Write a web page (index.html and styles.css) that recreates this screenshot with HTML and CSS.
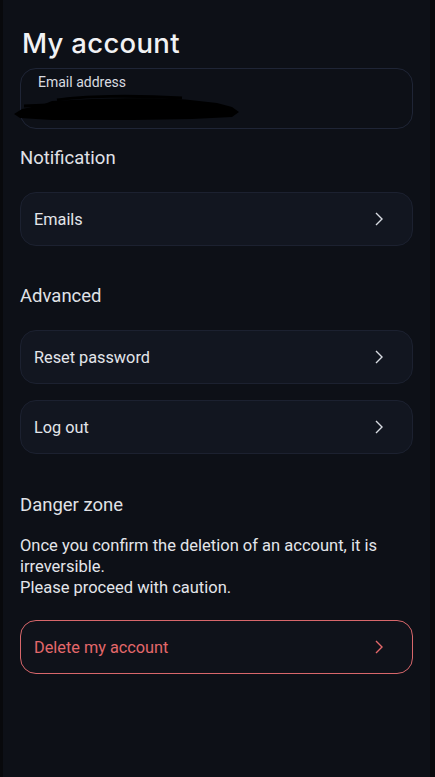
FILE: index.html
```html
<!DOCTYPE html>
<html lang="en">
<head>
<meta charset="utf-8">
<title>My account</title>
<link rel="stylesheet" href="styles.css">
</head>
<body>
<div class="page">
  <h1 class="title">My account</h1>

  <div class="field">
    <div class="field-label">Email address</div>
    <div class="field-value">
      <svg class="redact" width="230" height="28" viewBox="0 0 230 28" aria-hidden="true">
        <path d="M40 7 C80 4 150 3 178 6 L205 9 L220 13 L227 18 L220 23 L180 25 L120 26 L40 26 L8 24 L2 20 L10 15 L30 11 Z" fill="#000"/>
        <path d="M45 6 C70 2 120 1 170 4" stroke="#000" stroke-width="3" fill="none"/>
        <path d="M12 12 L60 10 L95 11" stroke="#000" stroke-width="3" fill="none"/>
      </svg>
    </div>
  </div>

  <h2 class="section">Notification</h2>
  <a class="row">
    <span>Emails</span>
    <svg class="chev" width="8" height="14" viewBox="0 0 8 14"><path d="M1 1 L7 7 L1 13" stroke="currentColor" stroke-width="1.4" fill="none"/></svg>
  </a>

  <h2 class="section section-gap">Advanced</h2>
  <div class="list">
    <a class="row">
      <span>Reset password</span>
      <svg class="chev" width="8" height="14" viewBox="0 0 8 14"><path d="M1 1 L7 7 L1 13" stroke="currentColor" stroke-width="1.4" fill="none"/></svg>
    </a>
    <a class="row">
      <span>Log out</span>
      <svg class="chev" width="8" height="14" viewBox="0 0 8 14"><path d="M1 1 L7 7 L1 13" stroke="currentColor" stroke-width="1.4" fill="none"/></svg>
    </a>
  </div>

  <h2 class="section section-gap2">Danger zone</h2>
  <p class="warn">Once you confirm the deletion of an account, it is irreversible.<br>Please proceed with caution.</p>
  <a class="row danger">
    <span>Delete my account</span>
    <svg class="chev" width="8" height="14" viewBox="0 0 8 14"><path d="M1 1 L7 7 L1 13" stroke="currentColor" stroke-width="1.4" fill="none"/></svg>
  </a>
</div>
</body>
</html>
```

FILE: styles.css
```css
* { box-sizing: border-box; }
html, body { margin: 0; padding: 0; height: 100%; }
body {
  background: #08090c;
  font-family: Roboto, "Noto Sans", sans-serif;
  color: #e3e5ea;
}
.page {
  margin: 0 5px 0 3px;
  min-height: 100%;
  background: #0d1017;
  padding: 26px 17px 40px 17px;
}
.title {
  margin: 0 0 8px 2px;
  font-family: Inter, "Open Sans", sans-serif;
  font-weight: 500;
  font-size: 27.5px;
  line-height: 34px;
  color: #f1f2f4;
  letter-spacing: 0.3px;
}
.field {
  border: 1px solid #1f2536;
  border-radius: 16px;
  height: 61px;
  padding: 4px 0 0 17px;
  position: relative;
}
.field-label {
  font-size: 14px;
  line-height: 18px;
  color: #d9dbe0;
}
.redact {
  position: absolute;
  left: -9px;
  top: 25px;
}
.section {
  margin: 18px 0 0 0;
  font-size: 18.5px;
  line-height: 23px;
  font-weight: 400;
  color: #e0e2e7;
}
.section-gap { margin-top: 39px; }
.section-gap2 { margin-top: 40px; }
.row {
  display: flex;
  align-items: center;
  justify-content: space-between;
  height: 54px;
  margin-top: 22px;
  padding: 0 29px 0 13px;
  background: #121620;
  border: 1px solid #1c2130;
  border-radius: 16px;
  font-size: 16.3px;
  color: #e3e5ea;
}
.list { display: flex; flex-direction: column; gap: 16px; margin-top: 22px; }
.list .row { margin-top: 0; }
.chev { color: #d8dbe2; }
.warn {
  margin: 18px 0 0 0;
  font-size: 16.5px;
  line-height: 21px;
  color: #e3e5ea;
}
.danger {
  margin-top: 22px;
  background: #0f121a;
  border: 1px solid #d8676b;
  color: #e4686b;
}
.danger .chev { color: #e4686b; }
```
